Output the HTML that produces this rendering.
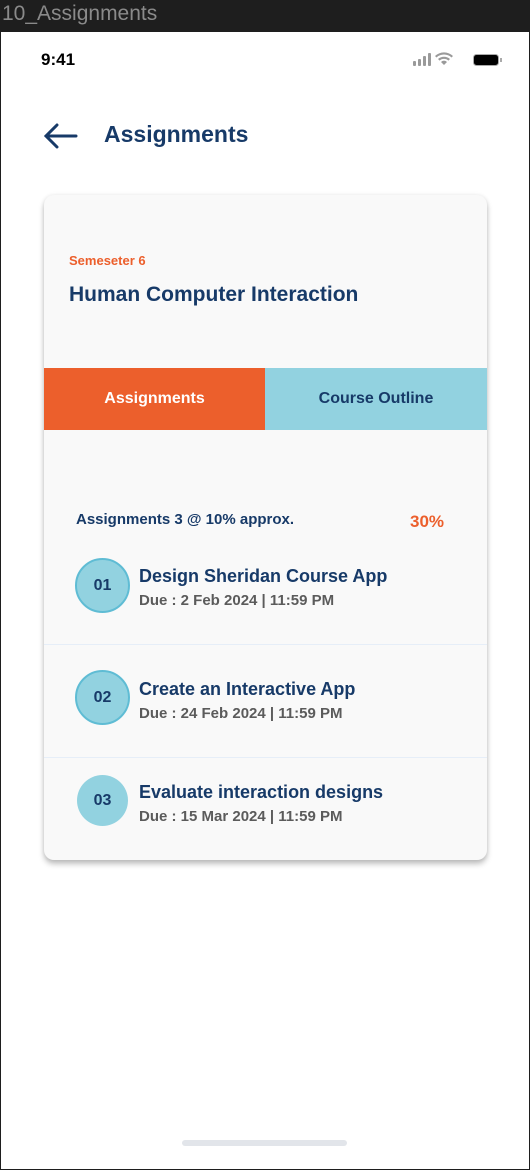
<!DOCTYPE html>
<html><head><style>
*{margin:0;padding:0;box-sizing:border-box}
body{width:530px;height:1170px;background:#1e1e1e;font-family:"Liberation Sans",sans-serif;position:relative;overflow:hidden}
.top{position:absolute;left:2px;top:2px;color:#8a8a8a;font-size:21px}
.scr{position:absolute;left:1px;top:32px;width:528px;height:1137px;background:#fff}
.a{position:absolute}
.navy{color:#173a68;font-weight:bold}
.card{position:absolute;left:43px;top:163px;width:443px;height:665px;background:#f9f9f9;border-radius:10px;box-shadow:0 4px 6px rgba(0,0,0,.25),0 0 4px rgba(0,0,0,.08);overflow:hidden}
.circ{position:absolute;left:31px;width:55px;height:55px;border-radius:50%;background:#92d2e0;border:2px solid #5fbcd4;color:#173a68;font-weight:bold;font-size:16px;text-align:center;line-height:51px}
.t{position:absolute;left:95px;font-size:18px;color:#173a68;font-weight:bold}
.d{position:absolute;left:95px;font-size:15px;color:#5b5b5b;font-weight:bold}
.ln{position:absolute;left:0;right:0;height:1px;background:#e6eef8}
</style></head><body>
<div class="top">10_Assignments</div>
<div class="scr">
<div class="a" style="left:40px;top:18px;font-size:17px;font-weight:bold;color:#000">9:41</div>
<svg class="a" style="left:410px;top:20px" width="100" height="16"><g fill="#9a9a9a"><rect x="2" y="9" width="3" height="5" rx="1"/><rect x="7" y="7" width="3" height="7" rx="1"/><rect x="12" y="4" width="3" height="10" rx="1"/><rect x="17" y="1" width="3" height="13" rx="1"/><path d="M33 13l3-3a4 4 0 0 0-6 0z"/><path d="M27 7a9 9 0 0 1 12 0l-1.6 1.6a6.5 6.5 0 0 0-8.8 0z"/><path d="M24 4a13 13 0 0 1 18 0l-1.5 1.5a11 11 0 0 0-15 0z"/></g><rect x="62.5" y="2.5" width="25" height="11" rx="3" fill="#000" stroke="#aaa"/><rect x="89" y="6" width="2" height="4" fill="#aaa"/></svg>
<svg class="a" style="left:42px;top:91px" width="36" height="26"><path d="M33 13H3M14 2L3 13l11 11" fill="none" stroke="#173a68" stroke-width="3" stroke-linecap="round"/></svg>
<div class="a navy" style="left:103px;top:89px;font-size:23px">Assignments</div>
<div class="card">
<div class="a" style="left:25px;top:58px;color:#ec5f2c;font-size:13px;font-weight:bold">Semeseter 6</div>
<div class="a navy" style="left:25px;top:88px;font-size:21px">Human Computer Interaction</div>
<div class="a" style="left:0;top:173px;width:221px;height:62px;background:#ec5f2c;color:#fff;font-weight:bold;font-size:16px;text-align:center;line-height:62px">Assignments</div>
<div class="a" style="left:221px;top:173px;width:222px;height:62px;background:#92d2e0;color:#173a68;font-weight:bold;font-size:16px;text-align:center;line-height:62px">Course Outline</div>
<div class="a navy" style="left:32px;top:316px;font-size:15px">Assignments 3 @ 10% approx.</div>
<div class="a" style="left:366px;top:317px;font-size:17px;color:#ec5f2c;font-weight:bold">30%</div>
<div class="circ" style="top:363px">01</div>
<div class="t" style="top:371px">Design Sheridan Course App</div>
<div class="d" style="top:397px">Due : 2 Feb 2024 | 11:59 PM</div>
<div class="ln" style="top:449px"></div>
<div class="circ" style="top:475px">02</div>
<div class="t" style="top:484px">Create an Interactive App</div>
<div class="d" style="top:510px">Due : 24 Feb 2024 | 11:59 PM</div>
<div class="ln" style="top:562px"></div>
<div class="circ" style="top:580px;border:none;width:51px;height:51px;left:33px;line-height:51px">03</div>
<div class="t" style="top:587px">Evaluate interaction designs</div>
<div class="d" style="top:613px">Due : 15 Mar 2024 | 11:59 PM</div>
</div>
<div class="a" style="left:181px;top:1108px;width:165px;height:6px;border-radius:3px;background:#e2e5ea"></div>
</div>
</body></html>
